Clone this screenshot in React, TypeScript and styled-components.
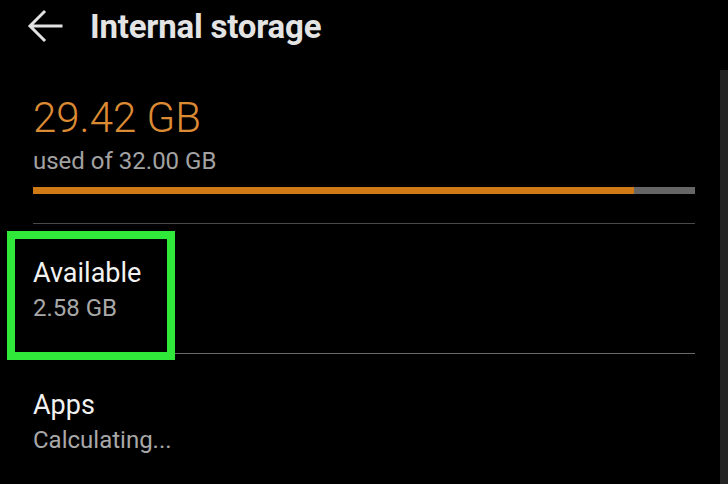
import styled, {createGlobalStyle} from 'styled-components'

const GlobalStyle = createGlobalStyle`
  html, body {
    margin: 0;
    padding: 0;
    background: #000;
  }
  body {
    font-family: Roboto, 'Liberation Sans', sans-serif;
    overflow: hidden;
  }
`

function BackArrow() {
  return (
    <svg width="36" height="34" viewBox="0 0 36 34" fill="none">
      <path
        d="M34 17H4M17 3L3 17l14 14"
        stroke="#e2e2e2"
        strokeWidth="3"
        strokeLinecap="square"
      />
    </svg>
  )
}

interface IItem {
  title: string
  value: string
  highlight?: boolean
}

const items: IItem[] = [
  {title: 'Available', value: '2.58 GB', highlight: true},
  {title: 'Apps', value: 'Calculating...'},
]

const used = 29.42
const total = 32

function App() {
  return (
    <Screen>
      <GlobalStyle />
      <Header>
        <BackArrow />
        <Title>Internal storage</Title>
      </Header>
      <Summary>
        <UsedValue>{used.toFixed(2)} GB</UsedValue>
        <UsedOf>used of {total.toFixed(2)} GB</UsedOf>
        <Bar>
          <BarFill style={{width: `${(used / total) * 100 - 1.1}%`}} />
        </Bar>
      </Summary>
      {items.map((item, i) => (
        <Row key={item.title} $last={i === items.length - 1}>
          <RowTitle>{item.title}</RowTitle>
          <RowValue>{item.value}</RowValue>
          {item.highlight && <Highlight />}
        </Row>
      ))}
      <ScrollThumb />
    </Screen>
  )
}

export default App

const Screen = styled.div`
  position: relative;
  width: 728px;
  height: 484px;
  background: #000;
  overflow: hidden;
`

const Header = styled.div`
  height: 52px;
  display: flex;
  align-items: center;
  padding-left: 27px;
  gap: 27px;
`

const Title = styled.div`
  color: #e4e4e4;
  font-size: 33px;
  font-weight: 700;
  letter-spacing: -0.2px;
`

const Summary = styled.div`
  margin: 0 33px;
  padding-top: 45px;
  padding-bottom: 29px;
  border-bottom: 1.5px solid #4a4a4a;
`

const UsedValue = styled.div`
  color: #dc8a33;
  font-size: 42px;
  font-weight: 300;
  line-height: 42px;
`

const UsedOf = styled.div`
  color: #a2a2a2;
  font-size: 24px;
  line-height: 26px;
  margin-top: 9px;
`

const Bar = styled.div`
  height: 7px;
  margin-top: 13px;
  background: #666;
  display: flex;
`

const BarFill = styled.div`
  height: 100%;
  background: #cf7a14;
`

const Row = styled.div<{$last?: boolean}>`
  position: relative;
  margin: 0 33px;
  padding: ${(p) => (p.$last ? '36px 0 0' : '34px 0 30px')};
  border-bottom: ${(p) => (p.$last ? 'none' : '1.5px solid #6a6a6a')};
`

const RowTitle = styled.div`
  color: #f2f2f2;
  font-size: 27px;
  line-height: 30px;
`

const RowValue = styled.div`
  color: #a8a8a8;
  font-size: 24px;
  line-height: 30px;
  margin-top: 5px;
`

const Highlight = styled.div`
  position: absolute;
  left: -26px;
  top: 7px;
  width: 152px;
  height: 113px;
  border: 8px solid #30e83a;
`

const ScrollThumb = styled.div`
  position: absolute;
  right: 0;
  top: 70px;
  width: 8px;
  bottom: 0;
  background: #242424;
`
